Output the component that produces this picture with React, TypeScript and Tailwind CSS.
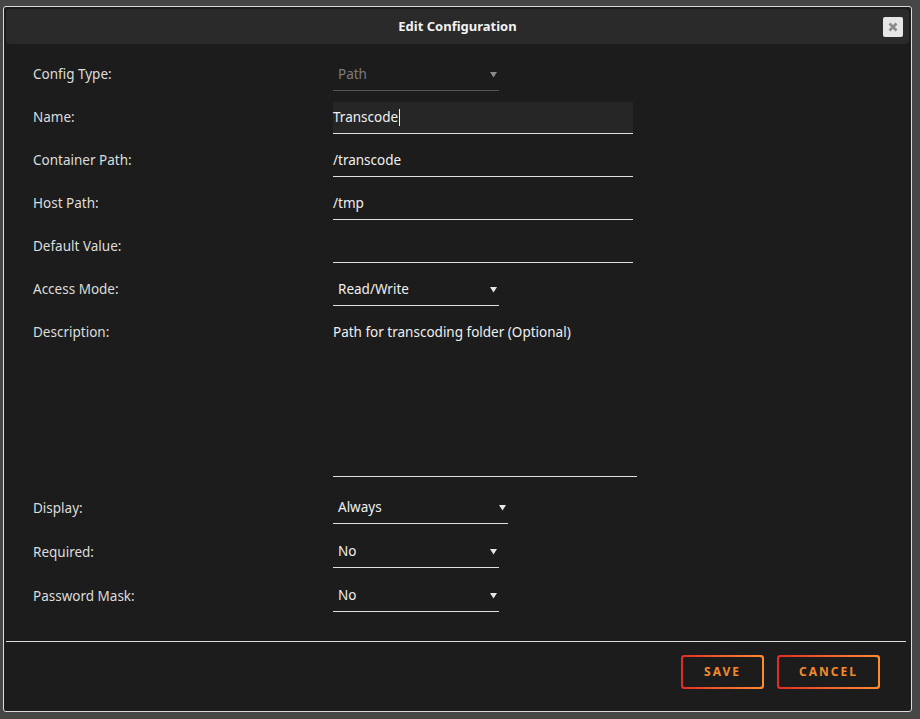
const font = { fontFamily: '"Noto Sans", "Open Sans", Arial, sans-serif' };

function Arrow({ muted }: { muted?: boolean }) {
  return (
    <svg width="7" height="7" viewBox="0 0 7 7" className={muted ? "text-[#8a8a8a]" : "text-[#e6e6e6]"}>
      <path d="M0 1h7L3.5 6.5z" fill="currentColor" />
    </svg>
  );
}

function Row({ label, children, tall }: { label: string; children: React.ReactNode; tall?: boolean }) {
  return (
    <div className={`flex ${tall ? "h-[44px]" : "h-[43px]"} items-center`}>
      <div className="w-[300px] shrink-0 text-[13.5px] text-[#dcdcdc]">{label}</div>
      {children}
    </div>
  );
}

function TextField({ value, active }: { value: string; active?: boolean }) {
  return (
    <div
      className={`flex h-[32px] w-[300px] items-center border-b border-[#e0e0e0] text-[13.5px] text-[#f0f0f0] ${
        active ? "bg-[#262626]" : ""
      }`}
    >
      {value}
      {active && <span className="ml-[1px] inline-block h-[17px] w-px bg-[#f0f0f0]" />}
    </div>
  );
}

function Select({ value, width, muted }: { value: string; width: string; muted?: boolean }) {
  return (
    <div
      className={`flex h-[32px] ${width} items-center justify-between border-b pl-[5px] pr-[2px] text-[13.5px] ${
        muted ? "border-[#555] text-[#7c7c7c]" : "border-[#e0e0e0] text-[#f0f0f0]"
      }`}
    >
      <span>{value}</span>
      <Arrow muted={muted} />
    </div>
  );
}

function GradientButton({ label, width }: { label: string; width: string }) {
  return (
    <div className={`rounded-[3px] bg-gradient-to-r from-[#e22828] to-[#ff8c2f] p-[2px] ${width} h-[34px]`}>
      <div className="flex h-full w-full items-center justify-center rounded-[2px] bg-[#1c1c1c] text-[12px] font-bold tracking-[2px] text-[#f48a2c]">
        {label}
      </div>
    </div>
  );
}

export default function App() {
  return (
    <div className="h-[719px] w-[920px] bg-[#464646] pl-[3px] pt-[6px]" style={font}>
      <div className="flex h-[706px] w-[909px] flex-col rounded-[3px] border border-[#dcdcdc] bg-[#1c1c1c] p-[2px]">
        <div className="relative flex h-[35px] shrink-0 items-center justify-center rounded-[4px] bg-[#2a2a2a]">
          <span className="text-[13px] font-bold text-[#f2f2f2]">Edit Configuration</span>
          <div className="absolute right-[6px] top-[8px] flex h-[20px] w-[20px] items-center justify-center rounded-[2px] bg-[#e6e6e6]">
            <svg width="10" height="10" viewBox="0 0 10 10">
              <path d="M1.5 1.5l7 7M8.5 1.5l-7 7" stroke="#8a8a8a" strokeWidth="2.6" />
            </svg>
          </div>
        </div>

        <div className="flex flex-col pl-[27px] pt-[9px]">
          <Row label="Config Type:">
            <Select value="Path" width="w-[166px]" muted />
          </Row>
          <Row label="Name:">
            <TextField value="Transcode" active />
          </Row>
          <Row label="Container Path:">
            <TextField value="/transcode" />
          </Row>
          <Row label="Host Path:">
            <TextField value="/tmp" />
          </Row>
          <Row label="Default Value:">
            <TextField value="" />
          </Row>
          <Row label="Access Mode:">
            <Select value="Read/Write" width="w-[166px]" />
          </Row>
          <div className="flex h-[175px] items-start pt-[11px]">
            <div className="w-[300px] shrink-0 text-[13.5px] leading-[20px] text-[#dcdcdc]">Description:</div>
            <div className="h-[155px] w-[304px] border-b border-[#e0e0e0] text-[13.5px] leading-[20px] text-[#f0f0f0]">
              Path for transcoding folder (Optional)
            </div>
          </div>
          <Row label="Display:" tall>
            <Select value="Always" width="w-[175px]" />
          </Row>
          <Row label="Required:" tall>
            <Select value="No" width="w-[166px]" />
          </Row>
          <Row label="Password Mask:" tall>
            <Select value="No" width="w-[166px]" />
          </Row>
        </div>

        <div className="mt-[23px] mr-[3px] h-px bg-[#dcdcdc]" />

        <div className="flex justify-end gap-[13px] pr-[29px] pt-[13px]">
          <GradientButton label="SAVE" width="w-[83px]" />
          <GradientButton label="CANCEL" width="w-[103px]" />
        </div>
      </div>
    </div>
  );
}
